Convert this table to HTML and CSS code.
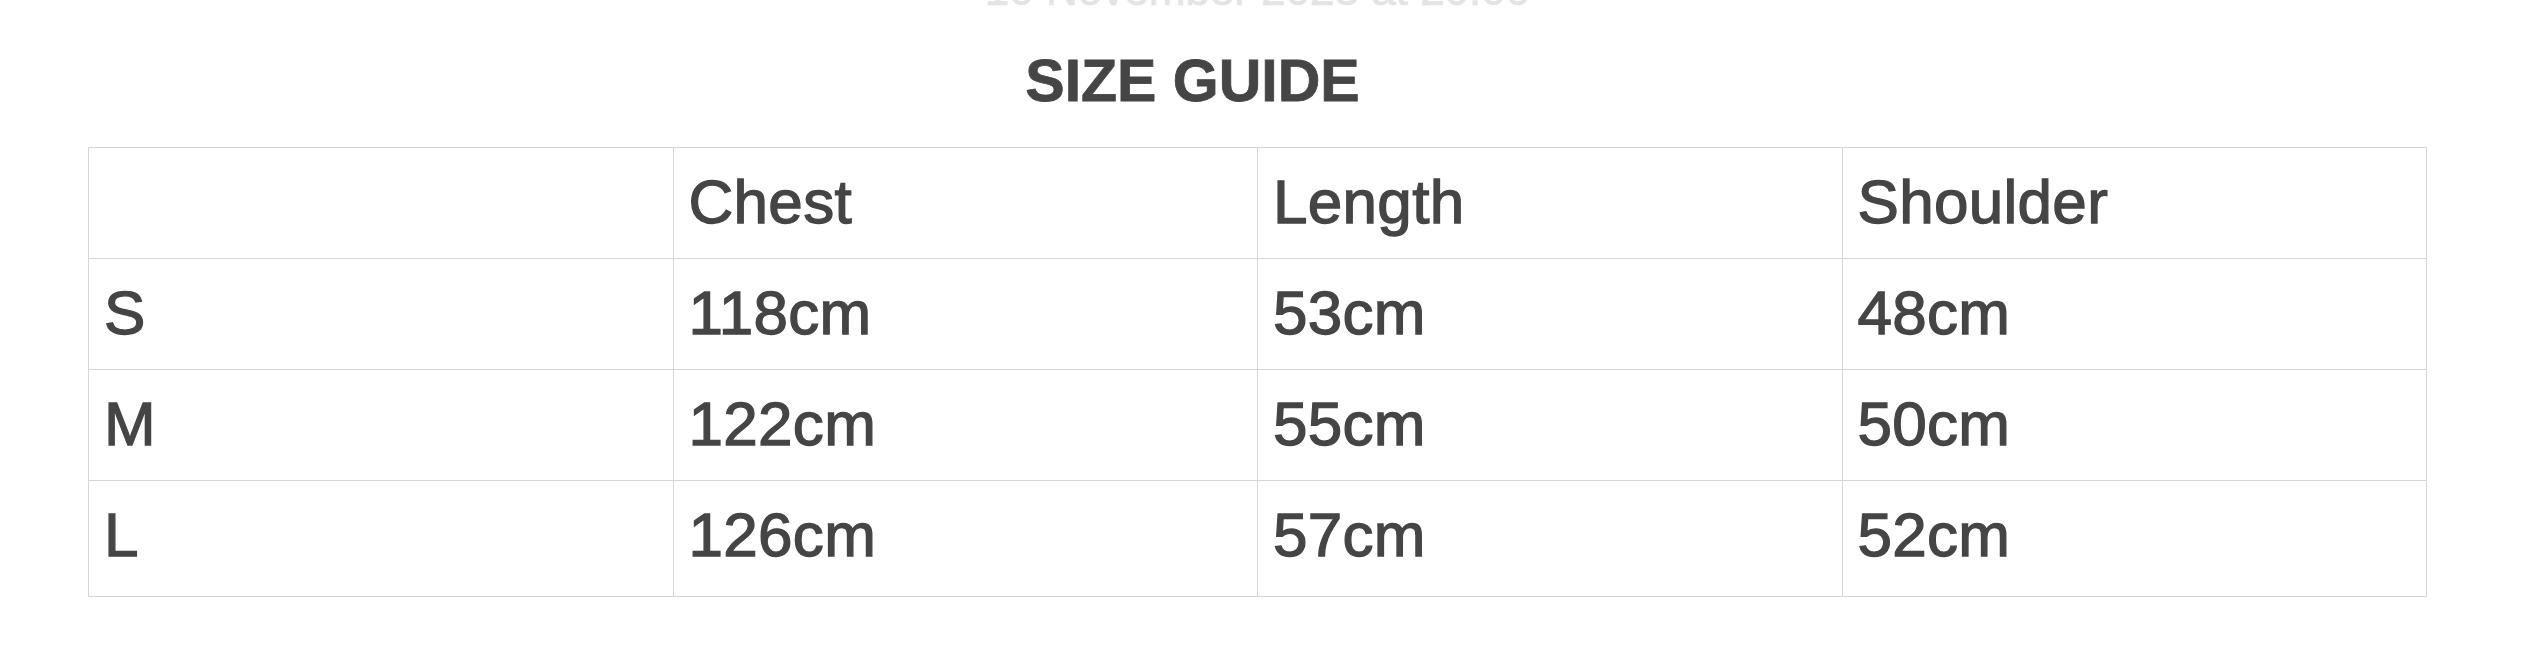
FILE: index.html
```html
<!DOCTYPE html>
<html lang="en">
<head>
<meta charset="utf-8">
<title>Size Guide</title>
<link rel="stylesheet" href="styles.css">
</head>
<body>
<div class="page">
  <div class="stamp">10 November 2023 at 20:00</div>
  <h2 class="title">SIZE GUIDE</h2>
  <table class="sizes">
    <thead>
      <tr><th></th><th>Chest</th><th>Length</th><th>Shoulder</th></tr>
    </thead>
    <tbody>
      <tr><td>S</td><td>118cm</td><td>53cm</td><td>48cm</td></tr>
      <tr><td>M</td><td>122cm</td><td>55cm</td><td>50cm</td></tr>
      <tr class="last"><td>L</td><td>126cm</td><td>57cm</td><td>52cm</td></tr>
    </tbody>
  </table>
</div>
</body>
</html>
```

FILE: styles.css
```css
html, body {
  margin: 0;
  padding: 0;
  background: #ffffff;
}

body {
  font-family: "Liberation Sans", Arial, sans-serif;
  color: #454545;
}

.page {
  padding: 0 97px 0 88px;
  overflow: hidden;
}

.stamp {
  text-align: center;
  color: #e4e4e4;
  font-size: 44px;
  line-height: 50px;
  margin-top: -35px;
  -webkit-text-stroke: 0.6px #e4e4e4;
}

.title {
  margin: 32px 0 32px;
  padding-right: 130px;
  text-align: center;
  font-size: 59px;
  line-height: 68px;
  font-weight: 700;
  color: #454545;
  -webkit-text-stroke: 0.8px #454545;
}

.sizes {
  width: 100%;
  table-layout: fixed;
  border-collapse: collapse;
  border: 1px solid #d6d6d6;
}

.sizes th,
.sizes td {
  border: 1px solid #d6d6d6;
  padding: 19px 15px 21px;
  font-size: 62px;
  line-height: 70px;
  letter-spacing: 0.3px;
  font-weight: 400;
  text-align: left;
  color: #454545;
  -webkit-text-stroke: 1.3px #454545;
}

.sizes .last td {
  padding-bottom: 26px;
}
```
